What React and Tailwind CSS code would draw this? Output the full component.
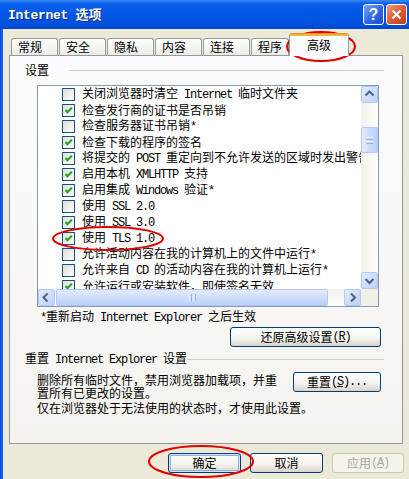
const LAT = "font-['Liberation_Mono',monospace] tracking-[-1.2px]"

function T({ s }) {
  return s.split(/([\x20-\x7E]+)/).map((p, i) =>
    !p ? null : /^[\x20-\x7E]+$/.test(p) ? (
      <span key={i} className={LAT}>{p}</span>
    ) : (
      <span key={i}>{p}</span>
    )
  )
}

const rows = [
  ['关闭浏览器时清空 Internet 临时文件夹', false],
  ['检查发行商的证书是否吊销', true],
  ['检查服务器证书吊销*', false],
  ['检查下载的程序的签名', true],
  ['将提交的 POST 重定向到不允许发送的区域时发出警告', true],
  ['启用本机 XMLHTTP 支持', true],
  ['启用集成 Windows 验证*', true],
  ['使用 SSL 2.0', false],
  ['使用 SSL 3.0', true],
  ['使用 TLS 1.0', true],
  ['允许活动内容在我的计算机上的文件中运行*', false],
  ['允许来自 CD 的活动内容在我的计算机上运行*', false],
  ['允许运行或安装软件，即使签名无效', true],
]

function CheckBox({ on }) {
  return (
    <div className="flex h-[13px] w-[13px] shrink-0 items-center justify-center border border-[#1C5180] bg-[linear-gradient(135deg,#DCDCD7,#FFFFFF)]">
      {on && (
        <svg viewBox="0 0 11 11" className="h-[11px] w-[11px]">
          <path d="M2.5 5 L4.5 7.2 L8.8 2.8" fill="none" stroke="#21A121" strokeWidth="2" />
        </svg>
      )}
    </div>
  )
}

function ScrollBtn({ dir }) {
  const d = {
    up: 'M4.5 9.5 L8.5 5.5 L12.5 9.5',
    down: 'M4.5 7 L8.5 11 L12.5 7',
    left: 'M9.5 4.5 L5.5 8.5 L9.5 12.5',
    right: 'M7 4.5 L11 8.5 L7 12.5',
  }[dir]
  return (
    <div className="h-[17px] w-[17px] shrink-0 rounded-[2px] border border-[#B3C7F5] bg-[linear-gradient(135deg,#E3EBFE,#BCD0FA)]">
      <svg viewBox="0 0 15 15" className="h-[15px] w-[15px]">
        <path d={d} transform="translate(-1 -1)" fill="none" stroke="#4D6185" strokeWidth="2" />
      </svg>
    </div>
  )
}

function Btn({ w, def, disabled, children }) {
  return (
    <div
      className={`flex h-[20px] ${w} items-center justify-center rounded-[3px] border ${
        disabled
          ? 'border-[#C9C7BA] bg-[#F5F4EA] text-[#ACA899]'
          : 'border-[#003C74] bg-[linear-gradient(180deg,#FFFFFF_0%,#F5F4EF_55%,#D9D4CA_100%)] text-black'
      } ${def ? 'shadow-[inset_0_0_0_1px_#CEE7FF,inset_0_0_0_2px_#8FAFEA]' : ''} whitespace-pre text-[12px] leading-[12px]`}
    >
      {children}
    </div>
  )
}

function Tab({ w, children }) {
  return (
    <div className={`h-[17px] ${w} mr-[1px] shrink-0 rounded-t-[3px] border border-b-0 border-[#919B9C] bg-[linear-gradient(180deg,#FFFFFF,#ECEBE6)] pl-[6px] pt-[2px] text-[12px] leading-[12px]`}>
      {children}
    </div>
  )
}

export default function App() {
  return (
    <div className="relative h-[479px] w-[409px] overflow-hidden bg-[#ECE9D8] font-['Noto_Sans_CJK_SC',sans-serif] text-[12px] leading-[12px] text-black">
      {/* title bar */}
      <div className="flex h-[29px] items-center bg-[linear-gradient(180deg,#3D8BF7_0%,#0A5FEA_12%,#0058E6_45%,#0052DF_80%,#0046CF_100%)] pl-[8px] pr-[2px]">
        <div className="whitespace-pre text-[13px] font-bold text-white [text-shadow:1px_1px_0_#0A2A80]">
          <span className="font-['Liberation_Mono',monospace] tracking-[-0.3px]">Internet </span>选项
        </div>
        <div className="flex-1" />
        <div className="flex h-[21px] w-[21px] items-center justify-center rounded-[3px] border border-white bg-[linear-gradient(135deg,#78A6FA,#2C66E6_55%,#1D4ED0)] font-['Liberation_Sans',sans-serif] text-[16px] font-bold text-white">
          ?
        </div>
        <div className="ml-[2px] flex h-[21px] w-[21px] items-center justify-center rounded-[3px] border border-white bg-[linear-gradient(135deg,#F09A7C,#E05A32_50%,#C23D1C)]">
          <svg viewBox="0 0 13 13" className="h-[13px] w-[13px]">
            <path d="M2.5 2.5 L10.5 10.5 M10.5 2.5 L2.5 10.5" stroke="white" strokeWidth="2.2" />
          </svg>
        </div>
      </div>

      <div className="flex h-[450px]">
        <div className="w-[3px] shrink-0 bg-[linear-gradient(90deg,#0831D9,#166AEE,#0855DD)]" />
        <div className="flex flex-1 flex-col pt-[4px]">
          {/* tabs */}
          <div className="flex h-[22px] items-end pl-[8px]">
            <Tab w="w-[47px]">常规</Tab>
            <Tab w="w-[47px]">安全</Tab>
            <Tab w="w-[47px]">隐私</Tab>
            <Tab w="w-[47px]">内容</Tab>
            <Tab w="w-[47px]">连接</Tab>
            <div className="h-[17px] w-[38px] shrink-0 rounded-t-[3px] border border-b-0 border-[#919B9C] bg-[linear-gradient(180deg,#FFFFFF,#ECEBE6)] pl-[6px] pt-[2px]">
              程序
            </div>
            <div className="relative z-10 -mb-[1px] flex h-[23px] w-[60px] shrink-0 flex-col overflow-hidden rounded-t-[3px] border-x border-[#919B9C] bg-[#FCFCFE]">
              <div className="h-[3px] bg-[linear-gradient(180deg,#E68B2C,#FFC73C)]" />
              <div className="pt-[3px] text-center">高级</div>
            </div>
          </div>

          {/* panel */}
          <div className="ml-[6px] flex h-[389px] w-[394px] flex-col border border-[#919B9C] bg-[linear-gradient(180deg,#FCFCFE,#F4F3EE)]">
            <div className="mt-[8px] flex h-[12px] items-center">
              <div className="ml-[15px]">设置</div>
              <div className="ml-[20px] mr-[18px] h-px flex-1 bg-[#D0D0BF]" />
            </div>

            <div className="ml-[27px] mt-[9px] grid h-[222px] w-[342px] grid-cols-[323px_17px] grid-rows-[203px_17px] border border-[#7F9DB9] bg-white">
              <div className="overflow-hidden whitespace-pre">
                {rows.map(([label, on]) => (
                  <div key={label} className="flex h-[16px] items-center">
                    <div className="ml-[24px]">
                      <CheckBox on={on} />
                    </div>
                    <div className="ml-[7px] leading-[12px]">
                      <T s={label} />
                    </div>
                  </div>
                ))}
              </div>
              <div className="flex flex-col bg-[linear-gradient(90deg,#F3F1EC,#FEFEFB)]">
                <ScrollBtn dir="up" />
                <div className="flex-1 pt-[24px]">
                  <div className="flex h-[26px] w-[17px] flex-col items-center justify-center gap-[1px] rounded-[2px] border border-[#B3C7F5] bg-[linear-gradient(90deg,#E3EBFE,#BCD0FA)]">
                    <div className="h-px w-[7px] bg-[#EEF4FE]" />
                    <div className="h-px w-[7px] bg-[#8CB0F8]" />
                    <div className="h-px w-[7px] bg-[#EEF4FE]" />
                    <div className="h-px w-[7px] bg-[#8CB0F8]" />
                  </div>
                </div>
                <ScrollBtn dir="down" />
              </div>
              <div className="flex bg-[linear-gradient(180deg,#F3F1EC,#FEFEFB)]">
                <ScrollBtn dir="left" />
                <div className="flex flex-1 pl-[1px]">
                  <div className="flex h-[17px] w-[272px] items-center justify-center gap-[1px] rounded-[2px] border border-[#B3C7F5] bg-[linear-gradient(180deg,#E3EBFE,#BCD0FA)]">
                    <div className="h-[7px] w-px bg-[#EEF4FE]" />
                    <div className="h-[7px] w-px bg-[#8CB0F8]" />
                    <div className="h-[7px] w-px bg-[#EEF4FE]" />
                    <div className="h-[7px] w-px bg-[#8CB0F8]" />
                  </div>
                </div>
                <ScrollBtn dir="right" />
              </div>
              <div className="bg-[#F1EFE6]" />
            </div>

            <div className="ml-[30px] mt-[3px] h-[12px] whitespace-pre">
              <T s="*重新启动 Internet Explorer 之后生效" />
            </div>

            <div className="ml-[220px] mt-[5px]">
              <Btn w="w-[151px]">
                还原高级设置<span className={LAT}>(<u>R</u>)</span>
              </Btn>
            </div>

            <div className="mt-[6px] flex h-[12px] items-center">
              <div className="ml-[15px] whitespace-pre">
                <T s="重置 Internet Explorer 设置" />
              </div>
              <div className="mr-[18px] h-px flex-1 bg-[#D0D0BF]" />
            </div>

            <div className="mt-[7px] flex items-start">
              <div className="ml-[27px] w-[240px] pt-[1px] leading-[13px]">
                删除所有临时文件，禁用浏览器加载项，并重
                <br />
                置所有已更改的设置。
              </div>
              <div className="ml-[16px]">
                <Btn w="w-[88px]">
                  重置<span className={LAT}>(<u>S</u>)...</span>
                </Btn>
              </div>
            </div>

            <div className="ml-[27px] mt-[3px]">仅在浏览器处于无法使用的状态时，才使用此设置。</div>
          </div>

          {/* dialog buttons */}
          <div className="ml-[165px] mt-[9px] flex gap-[9px]">
            <Btn w="w-[73px]" def>
              确定
            </Btn>
            <Btn w="w-[73px]">取消</Btn>
            <Btn w="w-[72px]" disabled>
              应用<span className={LAT}>(<u>A</u>)</span>
            </Btn>
          </div>
        </div>
      </div>

      {/* red annotations */}
      <svg className="pointer-events-none absolute inset-0 h-[479px] w-[409px]" viewBox="0 0 409 479">
        <ellipse cx="321" cy="46.5" rx="34" ry="14.5" fill="none" stroke="#E00000" strokeWidth="2" />
        <ellipse cx="108" cy="238.5" rx="55" ry="11.5" fill="none" stroke="#E00000" strokeWidth="2" />
        <ellipse cx="201" cy="461.5" rx="52" ry="15.5" fill="none" stroke="#E00000" strokeWidth="2" />
      </svg>
    </div>
  )
}
